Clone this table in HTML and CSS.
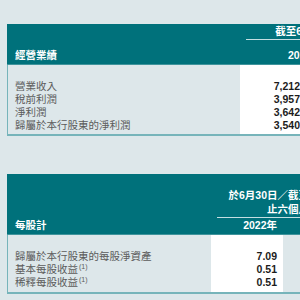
FILE: index.html
```html
<!DOCTYPE html>
<html lang="zh-Hant">
<head>
<meta charset="utf-8">
<link rel="stylesheet" href="styles.css">
</head>
<body>
<div class="page">
  <section class="tbl tbl1">
    <div class="head">
      <div class="title">經營業績</div>
      <div class="group">
        <div class="caption">截至6月30日止六個月</div>
        <div class="years"><span class="year">2022年</span></div>
      </div>
    </div>
    <div class="body">
      <div class="labels">
        <div class="row">營業收入</div>
        <div class="row">稅前利潤</div>
        <div class="row">淨利潤</div>
        <div class="row">歸屬於本行股東的淨利潤</div>
      </div>
      <div class="vals">
        <div class="row num">7,212</div>
        <div class="row num">3,957</div>
        <div class="row num">3,642</div>
        <div class="row num">3,540</div>
      </div>
      <div class="rest"></div>
    </div>
  </section>

  <section class="tbl tbl2">
    <div class="head">
      <div class="title">每股計</div>
      <div class="group">
        <div class="caption">於6月30日／截至6月30日<br>止六個月</div>
        <div class="years"><span class="year">2022年</span></div>
      </div>
    </div>
    <div class="body">
      <div class="labels">
        <div class="row">歸屬於本行股東的每股淨資產</div>
        <div class="row">基本每股收益<sup>(1)</sup></div>
        <div class="row">稀釋每股收益<sup>(1)</sup></div>
      </div>
      <div class="vals">
        <div class="row num">7.09</div>
        <div class="row num">0.51</div>
        <div class="row num">0.51</div>
      </div>
      <div class="rest"></div>
    </div>
  </section>
</div>
</body>
</html>
```

FILE: styles.css
```css
html, body {
  margin: 0;
  padding: 0;
  background: #dde7ea;
}
body {
  width: 300px;
  height: 300px;
  overflow: hidden;
  font-family: "Liberation Sans", "Noto Sans CJK TC", sans-serif;
  font-size: 10.5px;
}
.page {
  padding: 24px 0 0 7px;
  display: flex;
  flex-direction: column;
  gap: 38px;
}
.tbl {
  width: 420px;
}
.head {
  background: #00717b;
  color: #fff;
  font-weight: bold;
  display: flex;
  border-bottom: 1px solid #3f949c;
  box-sizing: border-box;
}
.title {
  display: flex;
  align-items: flex-end;
  padding: 0 0 2px 8px;
  line-height: 13px;
  box-sizing: border-box;
}
.group {
  display: flex;
  flex-direction: column;
  justify-content: flex-end;
}
.caption {
  margin-left: 6px;
  border-bottom: 1px solid #c4dfe2;
  text-align: center;
  line-height: 14px;
}
.years {
  display: flex;
  line-height: 13px;
  padding-bottom: 2px;
}
.body {
  display: flex;
  border-left: 1px solid #76b4ba;
  border-bottom: 2px solid #76b4ba;
}
.labels {
  color: #5b5b5b;
  box-sizing: border-box;
}
.row {
  line-height: 13px;
  white-space: nowrap;
}
.labels .row {
  padding-left: 7px;
}
.vals {
  background: #fff;
  box-sizing: border-box;
}
.num {
  text-align: right;
  padding-right: 6px;
  font-weight: bold;
  color: #1c1c1c;
}
.rest {
  flex: 1;
}
sup {
  font-size: 7px;
  line-height: 0;
  vertical-align: 4px;
  margin-left: 1px;
}

/* table 1 */
.tbl1 .head { height: 41px; }
.tbl1 .title { width: 233px; }
.tbl1 .group { width: 166px; }
.tbl1 .caption { padding-bottom: 1px; margin-bottom: 9px; }
.tbl1 .year { padding-left: 48px; }
.tbl1 .labels { width: 232px; padding: 15px 0 2px; }
.tbl1 .vals { width: 66px; padding: 15px 0 2px; }
.tbl1 .rest { background: #fff; }

/* table 2 */
.tbl2 .head { height: 61px; }
.tbl2 .title { width: 204px; }
.tbl2 .group { width: 148px; }
.tbl2 .caption { padding-bottom: 1px; margin-bottom: 1px; }
.tbl2 .year { width: 72px; text-align: right; padding-right: 6px; box-sizing: border-box; }
.tbl2 .labels { width: 203px; padding: 15px 0 3px; }
.tbl2 .vals { width: 72px; padding: 15px 0 3px; }
```
